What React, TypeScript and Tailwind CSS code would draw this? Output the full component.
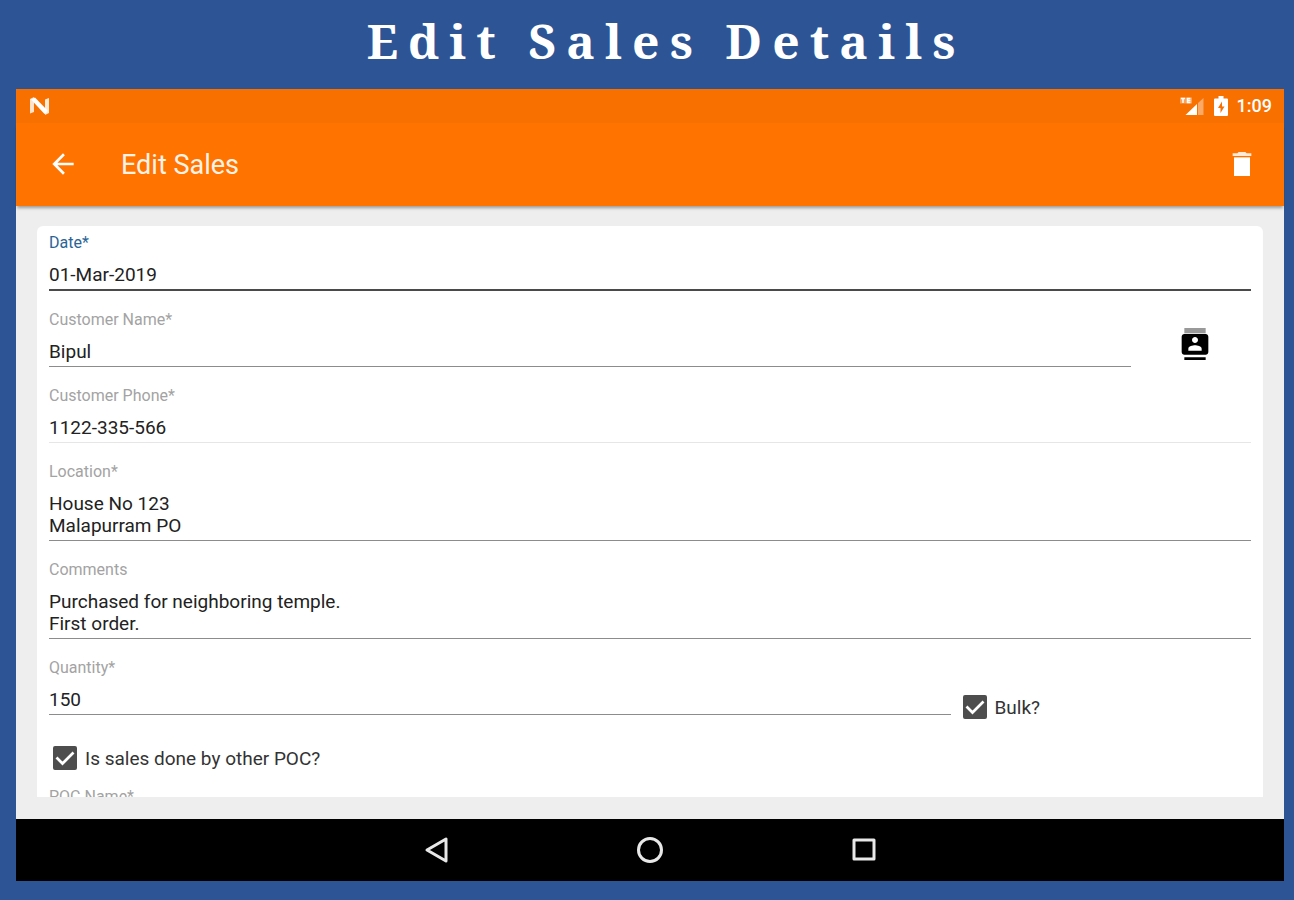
import { useState, type ReactNode } from 'react';

interface FieldProps {
  id: string;
  label: string;
  value: string;
  onChange: (value: string) => void;
  rows?: number;
  active?: boolean;
  disabled?: boolean;
}

function Field({ id, label, value, onChange, rows = 1, active, disabled }: FieldProps) {
  const line = active
    ? 'border-b-2 border-[#4a4a4a]'
    : disabled
      ? 'border-b border-[#e6e6e6]'
      : 'border-b border-[#8c8c8c]';
  const inputClass = `block w-full resize-none overflow-hidden bg-transparent pb-[3px] text-[19px] leading-[22px] text-[#222] outline-none ${line}`;

  return (
    <div className="pb-[19px]">
      <label
        htmlFor={id}
        className={`mb-[11px] block text-base leading-5 ${active ? 'text-[#2a6496]' : 'text-[#a3a3a3]'}`}
      >
        {label}
      </label>
      {rows > 1 ? (
        <textarea id={id} rows={rows} value={value} onChange={(e) => onChange(e.target.value)} className={inputClass} />
      ) : (
        <input id={id} type="text" value={value} readOnly={disabled} onChange={(e) => onChange(e.target.value)} className={inputClass} />
      )}
    </div>
  );
}

interface CheckProps {
  id: string;
  checked: boolean;
  onChange: (checked: boolean) => void;
  children: ReactNode;
}

function Check({ id, checked, onChange, children }: CheckProps) {
  return (
    <div className="flex items-center gap-2">
      <span className="relative size-6">
        <input
          id={id}
          type="checkbox"
          checked={checked}
          onChange={(e) => onChange(e.target.checked)}
          className="block size-6 appearance-none rounded-xs border-2 border-[#4d4d4d] bg-white checked:bg-[#4d4d4d]"
        />
        {checked && (
          <svg viewBox="0 0 24 24" className="pointer-events-none absolute inset-0" aria-hidden="true">
            <path d="M3.5 11.5l6 6L20.5 6.5" fill="none" stroke="#fff" strokeWidth="2.7" />
          </svg>
        )}
      </span>
      <label htmlFor={id} className="pt-0.5 text-[19px] leading-6 text-[#333]">
        {children}
      </label>
    </div>
  );
}

function StatusBar() {
  return (
    <div className="flex h-[34px] shrink-0 items-center bg-[#f87000] pr-3 pl-[14px] text-white">
      <svg viewBox="0 0 20 18" className="h-[18px] w-5" aria-hidden="true">
        <path d="M0 2l4-2v15l-4 1.500z" fill="#fff" fillOpacity=".8" />
        <path d="M15 2.500l4-1.500v15l-4 2z" fill="#fff" fillOpacity=".85" />
        <path d="M1 2.500L5 .5l13 13.500-3.500 3z" fill="#fff" />
      </svg>
      <svg viewBox="0 0 24 20" className="ml-auto h-5 w-6" aria-hidden="true">
        <path d="M0 1.500h12v6H0z" fill="#fff" fillOpacity=".35" />
        <path d="M1 2.500h4M3 2.500v4.500M10.500 2.500h-3v4h3M7.500 4.500h3" fill="none" stroke="#fff" strokeWidth="1.500" />
        <path d="M17 8v11H5.500z" fill="#fff" />
        <path d="M18 7l5.500-5v17H18z" fill="#fff" fillOpacity=".4" />
      </svg>
      <svg viewBox="0 0 14 20" className="ml-2.5 h-5 w-[14px]" aria-hidden="true">
        <path d="M4.500 0h5v2.500H13q1 0 1 1V19q0 1-1 1H1q-1 0-1-1V3.500q0-1 1-1h3.500z" fill="#fff" />
        <path d="M8 5.500L4 12h2.500v5l4-6.500H8z" fill="#f87000" />
      </svg>
      <span className="ml-[9px] text-lg leading-6 font-medium">1:09</span>
    </div>
  );
}

function NavBar() {
  return (
    <nav className="flex h-[62px] shrink-0 items-center justify-center gap-[182px] bg-black">
      <button type="button" aria-label="Back">
        <svg viewBox="0 0 32 32" className="size-8" fill="none" stroke="#e8e8e8" strokeWidth="3" strokeLinejoin="round" aria-hidden="true">
          <path d="M26 5v22L7 16z" />
        </svg>
      </button>
      <button type="button" aria-label="Home">
        <svg viewBox="0 0 32 32" className="size-8" fill="none" stroke="#e8e8e8" strokeWidth="3" aria-hidden="true">
          <circle cx="16" cy="16" r="11.500" />
        </svg>
      </button>
      <button type="button" aria-label="Overview">
        <svg viewBox="0 0 32 32" className="size-8" fill="none" stroke="#e8e8e8" strokeWidth="3" strokeLinejoin="round" aria-hidden="true">
          <path d="M6 6h20v19H6z" />
        </svg>
      </button>
    </nav>
  );
}

export default function App() {
  const [date, setDate] = useState('01-Mar-2019');
  const [name, setName] = useState('Bipul');
  const [phone, setPhone] = useState('1122-335-566');
  const [location, setLocation] = useState('House No 123\nMalapurram PO');
  const [comments, setComments] = useState('Purchased for neighboring temple.\nFirst order.');
  const [quantity, setQuantity] = useState('150');
  const [bulk, setBulk] = useState(true);
  const [otherPoc, setOtherPoc] = useState(true);
  const [pocName, setPocName] = useState('');

  return (
    <div className="flex h-screen flex-col bg-[#2d5595] pr-2.5 pb-[19px] pl-4 font-[Roboto,sans-serif]">
      <h1 className="flex h-[89px] shrink-0 items-center justify-center pb-2 pl-8 font-['Noto_Serif','Droid_Serif','DejaVu_Serif_Condensed','DejaVu_Serif',serif] text-[48px] font-bold tracking-[0.21em] text-white">
        Edit Sales Details
      </h1>

      <div className="flex min-h-0 flex-1 flex-col bg-[#eee]">
        <StatusBar />
        <header className="z-10 flex h-[83px] shrink-0 items-center bg-[#ff7300] pr-[26px] pb-0.5 pl-[31px] text-white shadow-[0_3px_3px_-1px_rgba(0,0,0,0.35)]">
          <button type="button" aria-label="Navigate up">
            <svg viewBox="0 0 24 24" className="size-8" fill="currentColor" aria-hidden="true">
              <path d="M20 11H7.830l5.590-5.590L12 4l-8 8 8 8 1.410-1.410L7.830 13H20v-2z" />
            </svg>
          </button>
          <h2 className="ml-[42px] pt-0.5 text-[27px] leading-8 text-[#fff3e8]">Edit Sales</h2>
          <button type="button" aria-label="Delete" className="ml-auto">
            <svg viewBox="0 0 24 24" className="size-8" fill="currentColor" aria-hidden="true">
              <path d="M6 7h12v14H6z" />
              <path d="M19 4h-3.500l-1-1h-5l-1 1H5v2h14V4z" fillOpacity=".85" />
            </svg>
          </button>
        </header>

        <main className="flex min-h-0 flex-1 flex-col px-[21px] pt-5 pb-[22px]">
          <form
            className="min-h-0 flex-1 overflow-y-auto rounded-t-md bg-white px-3 pt-[7px] [scrollbar-width:none]"
            onSubmit={(e) => e.preventDefault()}
          >
            <Field id="date" label="Date*" value={date} onChange={setDate} active />
            <div className="flex">
              <div className="w-9/10">
                <Field id="name" label="Customer Name*" value={name} onChange={setName} />
              </div>
              <div className="flex w-1/10 justify-center pt-[18px] pl-2">
                <button type="button" aria-label="Pick contact" className="size-8">
                  <svg viewBox="0 0 24 24" className="size-8" aria-hidden="true">
                    <path d="M4 0h16v4H4z" fill="#999" />
                    <path d="M4 24h16v-2H4v2zM20 4.500H4c-1.100 0-2 .9-2 2V18c0 1.100.9 2 2 2h16c1.100 0 2-.9 2-2V6.500c0-1.100-.9-2-2-2zm-8 2.250c1.240 0 2.250 1.010 2.250 2.250s-1.010 2.250-2.250 2.250S9.750 10.240 9.750 9 10.760 6.750 12 6.750zM17 17H7v-1.500c0-1.670 3.330-2.500 5-2.500s5 .83 5 2.500V17z" />
                  </svg>
                </button>
              </div>
            </div>
            <Field id="phone" label="Customer Phone*" value={phone} onChange={setPhone} disabled />
            <Field id="location" label="Location*" value={location} onChange={setLocation} rows={2} />
            <Field id="comments" label="Comments" value={comments} onChange={setComments} rows={2} />
            <div className="flex">
              <div className="w-3/4">
                <Field id="quantity" label="Quantity*" value={quantity} onChange={setQuantity} />
              </div>
              <div className="w-1/4 pt-9 pl-3">
                <Check id="bulk" checked={bulk} onChange={setBulk}>
                  Bulk?
                </Check>
              </div>
            </div>
            <div className="pt-[11px] pb-4 pl-1">
              <Check id="other-poc" checked={otherPoc} onChange={setOtherPoc}>
                Is sales done by other POC?
              </Check>
            </div>
            <Field id="poc-name" label="POC Name*" value={pocName} onChange={setPocName} />
          </form>
        </main>

        <NavBar />
      </div>
    </div>
  );
}
